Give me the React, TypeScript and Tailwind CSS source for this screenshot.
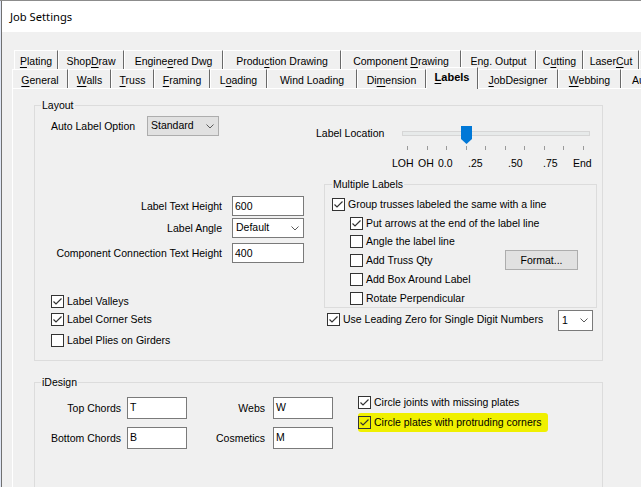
import React from 'react';

type Kids = { children?: React.ReactNode };

function U({ children }: Kids) {
  return <span className="underline decoration-1 underline-offset-[2px]">{children}</span>;
}

function Chevron() {
  return (
    <svg width="8" height="5" viewBox="0 0 8 5" className="shrink-0">
      <path d="M0.5 0.5 L4 4 L7.5 0.5" fill="none" stroke="#5a5a5a" strokeWidth="1" />
    </svg>
  );
}

function Tick() {
  return (
    <svg width="11" height="11" viewBox="0 0 11 11">
      <path d="M1.5 5.5 L4 8 L9.5 2.5" fill="none" stroke="#333" strokeWidth="1.2" />
    </svg>
  );
}

function CheckRow({
  checked,
  label,
  className = '',
  boxBg = 'bg-white',
}: {
  checked?: boolean;
  label: React.ReactNode;
  className?: string;
  boxBg?: string;
}) {
  return (
    <div className={`flex h-[18px] items-center ${className}`}>
      <span className={`flex h-[13px] w-[13px] shrink-0 items-center justify-center border border-[#333] ${boxBg}`}>
        {checked && <Tick />}
      </span>
      <span className="ml-[3px] whitespace-nowrap">{label}</span>
    </div>
  );
}

function Select({ className = '', value, gray }: { className?: string; value: string; gray?: boolean }) {
  return (
    <div
      className={`flex items-center justify-between border ${
        gray ? 'border-[#adadad] bg-[#e1e1e1]' : 'border-[#7a7a7a] bg-white'
      } ${className}`}
    >
      <span className="-mt-[1px] pl-[3px]">{value}</span>
      <span className="pr-[4px]">
        <Chevron />
      </span>
    </div>
  );
}

function Input({ className = '', value }: { className?: string; value: string }) {
  return (
    <div className={`border border-[#7a7a7a] bg-white pl-[2px] leading-[18px] ${className}`}>{value}</div>
  );
}

function Slider() {
  const ticks = Array.from({ length: 10 }, (_, i) => 7 + i * 19.56);
  return (
    <svg width="192" height="28" viewBox="0 0 192 28" className="shrink-0">
      <rect x="2.5" y="7.5" width="187" height="4" fill="#e7eaea" stroke="#d6d6d6" />
      {ticks.map((x) => (
        <line key={x} x1={Math.round(x) + 0.5} y1="22" x2={Math.round(x) + 0.5} y2="26" stroke="#9a9a9a" />
      ))}
      <path d="M61 2 H72 V15 L66.5 20 L61 15 Z" fill="#0078d7" />
    </svg>
  );
}

const backTabs = [
  { w: 'w-[44px]', label: <><U>P</U>lating</> },
  { w: 'w-[66px]', label: <>Shop<U>D</U>raw</> },
  { w: 'w-[99px]', label: <>Engine<U>e</U>red Dwg</> },
  { w: 'w-[118px]', label: <>Produ<U>c</U>tion Drawing</> },
  { w: 'w-[120px]', label: <>Component <U>D</U>rawing</> },
  { w: 'w-[75px]', label: <><U>E</U>ng. Output</> },
  { w: 'w-[47px]', label: <>C<U>u</U>tting</> },
  { w: 'w-[56px]', label: <>Laser<U>C</U>ut</> },
  { w: 'w-[40px]', label: <></> },
];

const frontTabs = [
  { w: 'w-[56px]', label: <><U>G</U>eneral</> },
  { w: 'w-[43px]', label: <><U>W</U>alls</> },
  { w: 'w-[43px]', label: <><U>T</U>russ</> },
  { w: 'w-[56px]', label: <><U>F</U>raming</> },
  { w: 'w-[57px]', label: <>L<U>o</U>ading</> },
  { w: 'w-[90px]', label: <>Wind Loading</> },
  { w: 'w-[69px]', label: <>Di<U>m</U>ension</> },
  { w: 'w-[52px]', label: <><U>L</U>abels</>, active: true },
  { w: 'w-[80px]', label: <><U>J</U>obDesigner</> },
  { w: 'w-[63px]', label: <><U>W</U>ebbing</> },
];

export default function App() {
  return (
    <div className="flex h-[487px] w-[641px] overflow-hidden border-t border-[#8c8c8c] bg-white font-['Liberation_Sans',Arial,sans-serif] text-[10.5px] leading-[13px] text-black">
      <div className="w-[1px] shrink-0 bg-[#dfe6f5]" />
      <div className="w-[1px] shrink-0 bg-[#707070]" />
      <div className="flex min-w-0 flex-1 flex-col">
        <div className="flex h-[31px] shrink-0 items-center bg-white pl-[8px] font-['Noto_Sans',sans-serif] text-[11.2px]">
          Job Settings
        </div>
        <div className="flex flex-1 flex-col bg-[#f0f0f0] pt-[18px]">
          {/* back tab row */}
          <div className="ml-[12px] flex h-[19px] shrink-0">
            {backTabs.map((t, i) => (
              <div
                key={i}
                className={`flex h-full shrink-0 items-center justify-center whitespace-nowrap border-l border-r border-t border-white border-r-[#696969] pt-[2px] ${t.w}`}
              >
                <span>{t.label}</span>
              </div>
            ))}
          </div>
          {/* front tab row */}
          <div className="ml-[10px] flex h-[19px] shrink-0 items-start">
            {frontTabs.map((t, i) =>
              t.active ? (
                <div
                  key={i}
                  className={`relative z-10 -mt-[2px] flex h-[22px] shrink-0 items-start justify-center whitespace-nowrap border-l border-r border-t border-white border-r-[#696969] bg-[#f0f0f0] pt-[3px] text-[11px] font-bold ${t.w}`}
                >
                  <span>{t.label}</span>
                </div>
              ) : (
                <div
                  key={i}
                  className={`flex h-full shrink-0 items-center justify-center whitespace-nowrap border-l border-r border-t border-white border-r-[#696969] pt-[2px] ${t.w}`}
                >
                  <span>{t.label}</span>
                </div>
              )
            )}
            <div className="flex h-full w-[60px] shrink-0 items-center whitespace-nowrap border-l border-t border-white pl-[10px] pt-[2px]">
              Auto
            </div>
          </div>

          {/* tab page */}
          <div className="ml-[10px] flex-1 border-l border-t border-white">
            <fieldset className="ml-[21px] mt-[10px] w-[569px] border border-[#dcdcdc]">
              <legend className="ml-[6px] px-[1px] leading-[13px]">Layout</legend>
              <div className="flex">
                <div className="w-[281px] shrink-0 pb-[11px] pl-[16px]">
                  <div className="mt-[4px] flex h-[20px] items-center">
                    <span className="w-[96px] shrink-0">Auto Label Option</span>
                    <Select gray value="Standard" className="h-[20px] w-[72px]" />
                  </div>

                  <div className="mt-[60px] flex items-center">
                    <span className="w-[171px] text-right">Label Text Height</span>
                    <Input className="ml-[10px] h-[20px] w-[72px]" value="600" />
                  </div>
                  <div className="mt-[2px] flex items-center">
                    <span className="w-[171px] text-right">Label Angle</span>
                    <Select value="Default" className="ml-[10px] h-[20px] w-[72px]" />
                  </div>
                  <div className="mt-[5px] flex items-center">
                    <span className="w-[171px] whitespace-nowrap text-right">Component Connection Text Height</span>
                    <Input className="ml-[10px] h-[20px] w-[72px]" value="400" />
                  </div>

                  <CheckRow checked label="Label Valleys" className="mt-[29px]" />
                  <CheckRow checked label="Label Corner Sets" />
                  <CheckRow label="Label Plies on Girders" className="mt-[3px]" />
                </div>

                <div className="flex-1">
                  <div className="mt-[12px] flex h-[28px] items-start">
                    <span className="mt-[3px] w-[84px] shrink-0 whitespace-nowrap">Label Location</span>
                    <Slider />
                  </div>
                  <div className="mt-[5px] flex pl-[76px] leading-[13px]">
                    <span className="w-[26px] shrink-0">LOH</span>
                    <span className="w-[20px] shrink-0">OH</span>
                    <span className="w-[30px] shrink-0">0.0</span>
                    <span className="w-[40px] shrink-0">.25</span>
                    <span className="w-[35px] shrink-0">.50</span>
                    <span className="w-[30px] shrink-0">.75</span>
                    <span className="shrink-0">End</span>
                  </div>

                  <fieldset className="ml-[8px] mt-[8px] w-[273px] border border-[#dcdcdc]">
                    <legend className="ml-[7px] px-[1px] leading-[13px]">Multiple Labels</legend>
                    <div className="pl-[7px] pt-[4px]">
                      <CheckRow checked label="Group trusses labeled the same with a line" />
                      <div className="pl-[18px]">
                        <CheckRow checked label="Put arrows at the end of the label line" className="mt-[1px]" />
                        <CheckRow label="Angle the label line" />
                        <div className="flex items-center">
                          <CheckRow label="Add Truss Qty" className="w-[155px]" />
                          <div className="flex h-[20px] w-[73px] items-center justify-center border border-[#adadad] bg-[#e1e1e1]">
                            Format...
                          </div>
                        </div>
                        <CheckRow label="Add Box Around Label" />
                        <CheckRow label="Rotate Perpendicular" className="mt-[1px]" />
                      </div>
                    </div>
                  </fieldset>

                  <div className="mt-[2px] flex h-[21px] items-start">
                    <CheckRow checked label="Use Leading Zero for Single Digit Numbers" className="ml-[11px] w-[231px]" />
                    <Select value="1" className="h-[21px] w-[35px]" />
                  </div>
                </div>
              </div>
            </fieldset>

            <fieldset className="ml-[21px] mt-[15px] w-[569px] border border-[#dcdcdc] pb-[60px]">
              <legend className="ml-[6px] px-[1px] leading-[13px]">iDesign</legend>
              <div className="flex">
                <div className="pt-[8px]">
                  <div className="flex h-[22px] items-center">
                    <span className="w-[86px] text-right">Top Chords</span>
                    <Input className="ml-[6px] h-[22px] w-[60px]" value="T" />
                    <span className="w-[78px] text-right">Webs</span>
                    <Input className="ml-[8px] h-[22px] w-[60px]" value="W" />
                  </div>
                  <div className="mt-[8px] flex h-[22px] items-center">
                    <span className="w-[86px] text-right">Bottom Chords</span>
                    <Input className="ml-[6px] h-[22px] w-[60px]" value="B" />
                    <span className="w-[78px] text-right">Cosmetics</span>
                    <Input className="ml-[8px] h-[22px] w-[60px]" value="M" />
                  </div>
                </div>
                <div className="ml-[25px] pt-[4px]">
                  <CheckRow checked label="Circle joints with missing plates" />
                  <div className="mt-[2px] flex h-[19px] w-[190px] items-center rounded-[3px] bg-[#f0f000]">
                    <CheckRow checked boxBg="bg-transparent" label="Circle plates with protruding corners" />
                  </div>
                </div>
              </div>
            </fieldset>
          </div>
        </div>
      </div>
    </div>
  );
}
